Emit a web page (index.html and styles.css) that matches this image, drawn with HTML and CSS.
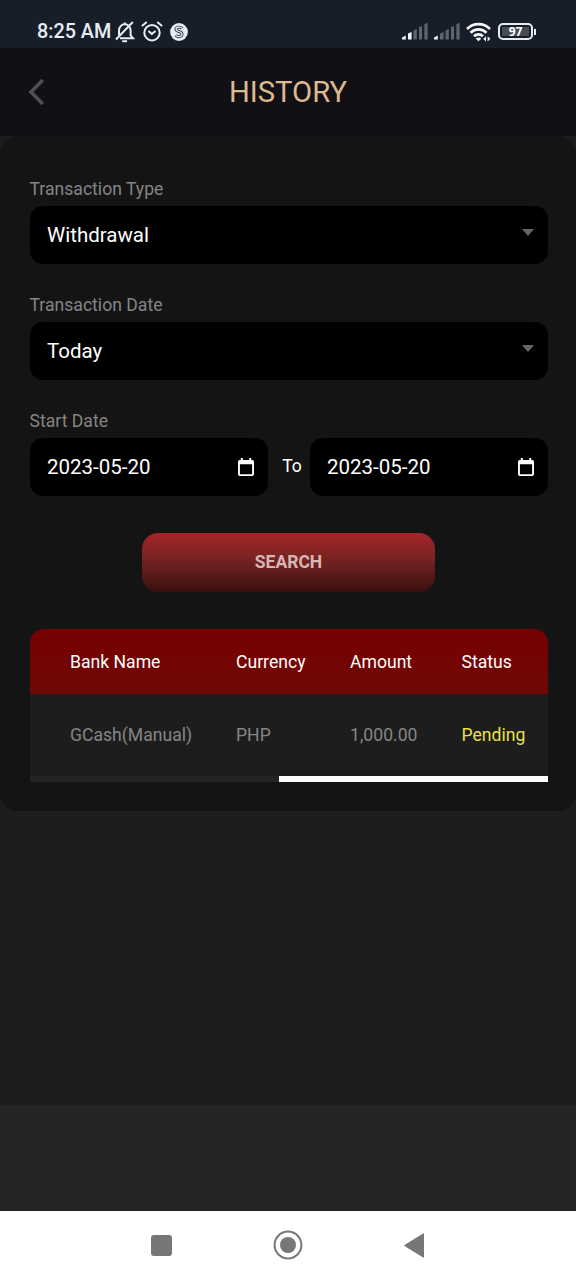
FILE: index.html
```html
<!DOCTYPE html>
<html lang="en">
<head>
<meta charset="utf-8">
<title>History</title>
<link rel="stylesheet" href="styles.css">
</head>
<body>
<div class="status-bar">
  <span class="clock">8:25 AM</span>
  <svg class="icon-bell" width="20" height="22" viewBox="0 0 20 22" fill="none" stroke="#e8edf5" stroke-width="2">
    <path d="M4 14.500V9.500C4 6 6.500 3.300 9.800 3.300S15.600 6 15.600 9.500V14.500L18 17.300H5"/>
    <path d="M9.800 1.500V4M1 18.500L17.800 1"/>
    <path d="M7.300 20.200h4.700"/>
  </svg>
  <svg class="icon-alarm" width="22" height="22" viewBox="0 0 22 22" fill="none" stroke="#e8edf5" stroke-width="2" stroke-linecap="round">
    <circle cx="11" cy="11.700" r="7.700"/>
    <path d="M1.500 4.500L5.200 1.500M20.500 4.500L16.800 1.500"/>
    <path d="M8 10.500L10.800 13L14 10.500"/>
  </svg>
  <svg class="icon-app" width="18" height="18" viewBox="0 0 18 18">
    <circle cx="9" cy="9" r="8.900" fill="#e8edf5"/>
    <path d="M12.200 5.500C10.500 3.300 5.800 4 6 6.500C6.200 9 11.900 8 12 11C12.100 13.900 7.400 14.600 5.700 12.200" fill="none" stroke="#303743" stroke-width="3"/>
    <path d="M12.200 5.500C10.500 3.300 5.800 4 6 6.500C6.200 9 11.900 8 12 11C12.100 13.900 7.400 14.600 5.700 12.200" fill="none" stroke="#e8edf5" stroke-width="1.300"/>
  </svg>
  <div class="status-right">
    <svg width="26" height="17" viewBox="0 0 26 17" fill="#5d6470">
      <path d="M0 16.500V14.500L3.800 12.500V16.500Z" fill="#f3f5f8"/>
      <path d="M6 10.500L9.600 9V16.500H6Z" fill="#f3f5f8"/>
      <path d="M11.500 7.500L14.800 6V16.500H11.500ZM17 4L20 3V16.500H17ZM22.400 1L25.600 0V16.500H22.400Z"/>
    </svg>
    <svg class="signal-two" width="26" height="17" viewBox="0 0 26 17" fill="#5d6470">
      <path d="M0 16.500V14.500L3.800 12.500V16.500Z" fill="#f3f5f8"/>
      <path d="M6 10.500L9.600 9V16.500H6ZM11.500 7.500L14.800 6V16.500H11.500ZM17 4L20 3V16.500H17ZM22.400 1L25.600 0V16.500H22.400Z"/>
    </svg>
    <svg class="wifi" width="26" height="20" viewBox="0 0 26 20" fill="none" stroke="#f3f5f8" stroke-width="2.700">
      <path d="M1 7C7.500 .6 17.500 .6 24 7"/>
      <path d="M4.500 10.800C9 6.200 16 6.200 20.500 10.800"/>
      <path d="M8 14.300C10.500 11.700 14.500 11.700 17 14.300"/>
      <path d="M9.700 16.800Q12.500 14.300 15.300 16.800L12.500 19.300Z" fill="#f3f5f8" stroke="none"/>
      <path d="M20 14.300V19.500L17.200 17ZM21.600 19.500V14.300L24.400 16.800Z" fill="#f3f5f8" stroke="none"/>
    </svg>
    <div class="battery"><span class="battery-level">97</span></div>
    <span class="battery-tip"></span>
  </div>
</div>

<header class="header">
  <svg class="back" width="17" height="28" viewBox="0 0 17 28" fill="none" stroke="#4f4f51" stroke-width="3.600"><path d="M14.800 2L3 14L14.800 26"/></svg>
  <h1 class="title">HISTORY</h1>
</header>

<main class="card">
  <div class="group">
    <div class="label">Transaction Type</div>
    <div class="field">Withdrawal<span class="caret"></span></div>
  </div>
  <div class="group">
    <div class="label">Transaction Date</div>
    <div class="field">Today<span class="caret"></span></div>
  </div>
  <div class="group">
    <div class="label">Start Date</div>
    <div class="dates">
      <div class="field date">2023-05-20
        <svg class="calendar" width="16" height="18" viewBox="0 0 16 18"><path d="M2.800 0H4.800V2H11.200V0H13.200V2H14.200A1.800 1.800 0 0 1 16 3.800V16.200A1.800 1.800 0 0 1 14.200 18H1.800A1.800 1.800 0 0 1 0 16.200V3.800A1.800 1.800 0 0 1 1.800 2H2.800ZM1.900 6.300V16.200H14.100V6.300Z" fill="#fff" fill-rule="evenodd"/></svg>
      </div>
      <span class="to">To</span>
      <div class="field date">2023-05-20
        <svg class="calendar" width="16" height="18" viewBox="0 0 16 18"><path d="M2.800 0H4.800V2H11.200V0H13.200V2H14.200A1.800 1.800 0 0 1 16 3.800V16.200A1.800 1.800 0 0 1 14.200 18H1.800A1.800 1.800 0 0 1 0 16.200V3.800A1.800 1.800 0 0 1 1.800 2H2.800ZM1.900 6.300V16.200H14.100V6.300Z" fill="#fff" fill-rule="evenodd"/></svg>
      </div>
    </div>
  </div>
  <button class="search">SEARCH</button>
  <div class="table">
    <div class="row head"><span>Bank Name</span><span>Currency</span><span>Amount</span><span>Status</span></div>
    <div class="row body"><span>GCash(Manual)</span><span>PHP</span><span>1,000.00</span><span class="pending">Pending</span></div>
    <div class="track"><div class="thumb"></div></div>
  </div>
</main>

<div class="footer"></div>
<nav class="nav">
  <svg width="21" height="21" viewBox="0 0 21 21"><rect width="21" height="21" rx="3" fill="#777"/></svg>
  <svg width="30" height="30" viewBox="0 0 30 30"><circle cx="15" cy="15" r="13.400" fill="none" stroke="#777" stroke-width="2"/><circle cx="15" cy="15" r="8" fill="#777"/></svg>
  <svg width="20" height="25" viewBox="0 0 20 25"><path d="M19.500 .8V24.200L.500 12.500Z" fill="#777" stroke="#777" stroke-linejoin="round"/></svg>
</nav>
</body>
</html>
```

FILE: styles.css
```css
* { box-sizing: border-box; }
body {
  margin: 0;
  height: 1280px;
  display: flex;
  flex-direction: column;
  background: #1d1d1d;
  font-family: Roboto, sans-serif;
  color: #fff;
}
svg { display: block; flex: none; }
.status-bar {
  height: 48px;
  padding: 15px 40px 0 37px;
  display: flex;
  align-items: center;
  background: #171e29;
}
.clock { width: 78px; padding-top: 1px; font-size: 19.800px; font-weight: 500; line-height: 32px; color: #e8edf5; white-space: nowrap; }
.icon-alarm { margin-left: 6px; }
.icon-app { margin-left: 7px; }
.status-right { margin-left: auto; display: flex; align-items: center; }
.signal-two { margin-left: 6px; }
.wifi { margin-left: 6px; }
.battery {
  width: 35px;
  height: 17px;
  margin-left: 6px;
  padding: 2px;
  border: 2px solid #e8eaee;
  border-radius: 5px;
}
.battery-level {
  display: block;
  background: #454b54;
  font-family: "Noto Sans", sans-serif;
  font-size: 12px;
  font-weight: 700;
  line-height: 9px;
  text-align: center;
}
.battery-tip { width: 2px; height: 6px; margin-left: 1px; background: #e8eaee; }
.header {
  height: 88px;
  display: grid;
  grid-template-columns: 48px 1fr 48px;
  align-items: center;
  background: #111015;
}
.back { margin-left: 28px; }
.title { margin: 0; font-size: 29.200px; font-weight: 400; text-align: center; color: #dfb98e; }
.card {
  height: 675px;
  padding: 41px 28.500px 29px 29.500px;
  display: flex;
  flex-direction: column;
  border-radius: 18px;
  background: #141414;
}
.group { margin-bottom: 29px; }
.label { height: 28.500px; font-size: 17.600px; line-height: 24px; color: #858585; }
.field {
  height: 58.500px;
  padding: 0 14px 0 17.500px;
  display: flex;
  align-items: center;
  justify-content: space-between;
  border-radius: 13px;
  background: #000;
  font-size: 20.500px;
}
.caret {
  margin-bottom: 5px;
  border: 6px solid transparent;
  border-top: 7px solid #666;
  border-bottom: 0;
}
.dates { display: grid; grid-template-columns: 238px 1fr 238px; align-items: center; }
.to { padding: 0 0 1px 7px; text-align: center; font-size: 17.600px; }
.search {
  width: 293px;
  height: 59px;
  margin: 8px auto 37px;
  padding: 0 0 1px;
  border: 0;
  border-radius: 16px;
  background: linear-gradient(#a42528, #7b2423 40%, #38100f);
  font: 700 17.500px Roboto, sans-serif;
  color: #d7b6b4;
}
.table { overflow: hidden; border-radius: 14px 14px 0 0; background: #1d1d1d; }
.row {
  padding-left: 40.500px;
  display: grid;
  grid-template-columns: 166px 114px 111.500px 1fr;
  align-items: center;
  font-size: 17.600px;
}
.head { height: 65px; background: linear-gradient(#760000, #700904); }
.body { height: 82px; padding-bottom: 1px; color: #858585; }
.pending { color: #e8e04a; }
.track { height: 6px; background: #232323; }
.thumb { width: 269px; height: 6px; margin-left: auto; background: #fff; }
.footer { height: 106px; margin-top: auto; background: #242424; }
.nav {
  height: 69px;
  padding: 0 152px 1px 151px;
  display: flex;
  align-items: center;
  justify-content: space-between;
  background: #fff;
}
```
